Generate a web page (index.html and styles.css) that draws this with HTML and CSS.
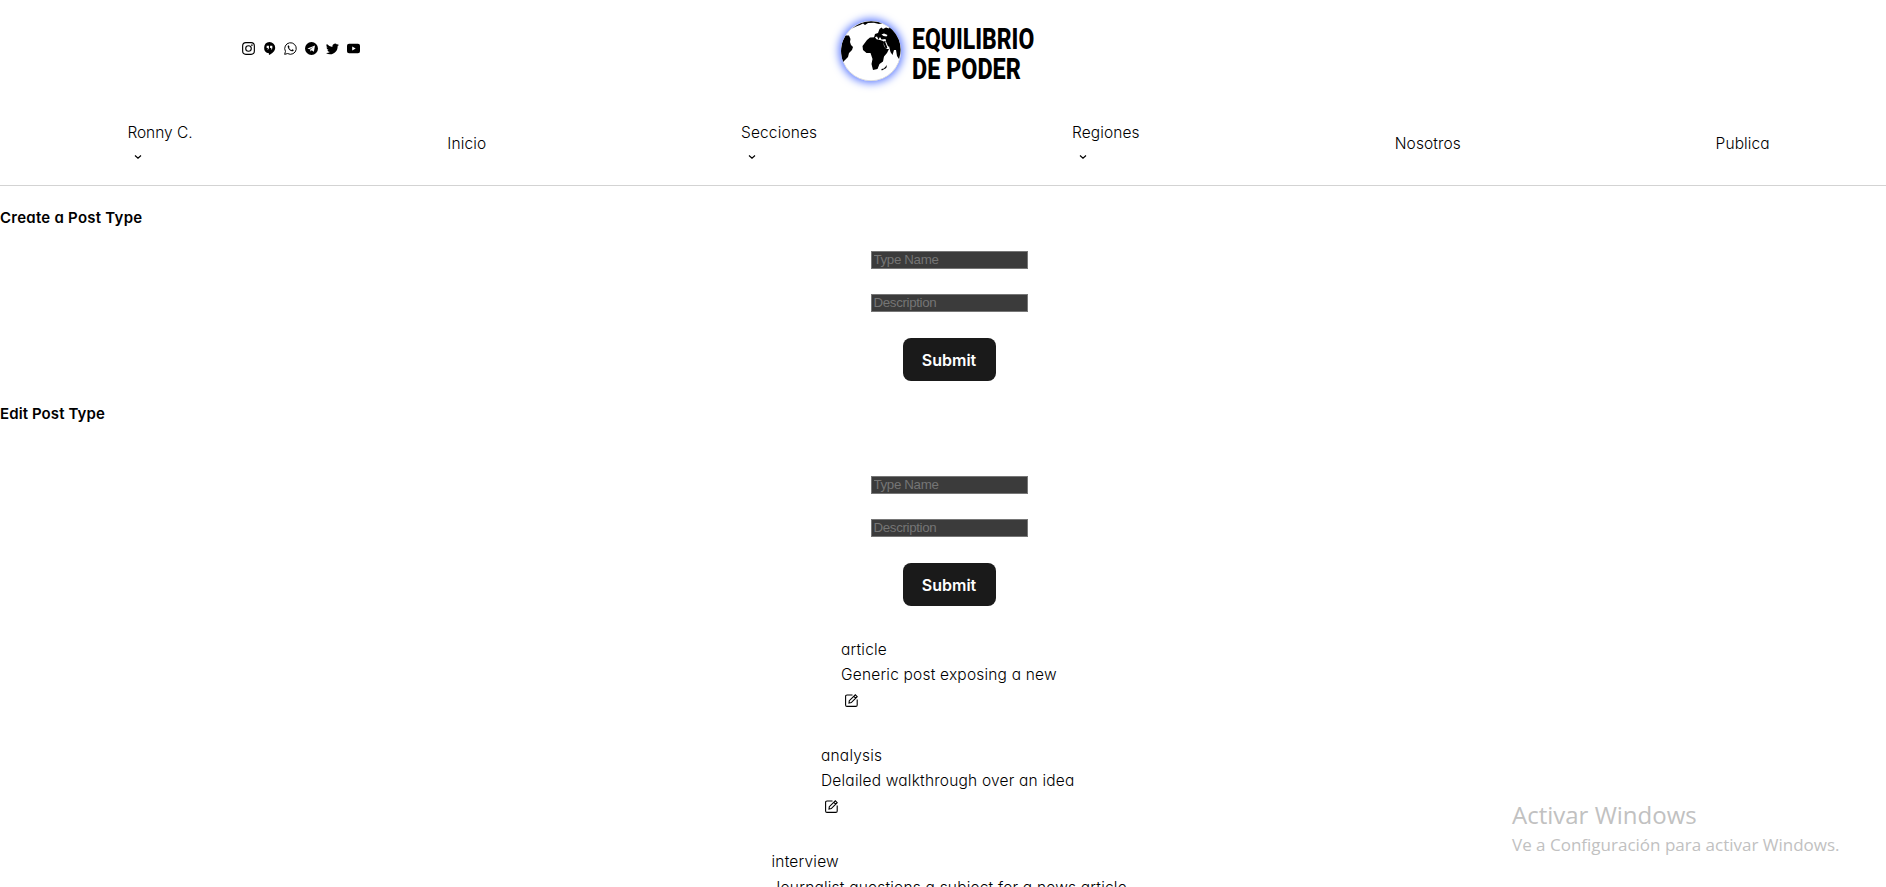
FILE: index.html
```
<!DOCTYPE html>
<html lang="es">
<head>
<meta charset="utf-8">
<title>Equilibrio de Poder</title>
<link rel="stylesheet" href="styles.css">
</head>
<body>
<header class="header">
  <div class="brand-row">
    <div class="social">
      <svg viewBox="0 0 16 16"><rect x=".8" y=".8" width="14.400" height="14.400" rx="4" fill="none" stroke="#000" stroke-width="1.400"/><circle cx="8" cy="8" r="3.400" fill="none" stroke="#000" stroke-width="1.400"/><circle cx="12.200" cy="3.900" r="1"/></svg>
      <svg viewBox="0 0 16 16"><path fill-rule="evenodd" d="M8 0a7 7 0 0 0-.7 13.900V16c4-1.700 7.700-5 7.700-9A7 7 0 0 0 8 0zM7.300 7.200c0 1.500-.8 2.200-1.700 2.400V8.200c.5-.1.700-.4.700-.8H4.500V4.600h2.800zm4.200 0c0 1.500-.8 2.200-1.700 2.400V8.200c.5-.1.700-.4.700-.8H8.700V4.600h2.800z"/></svg>
      <svg viewBox="0 0 16 16"><path d="M.8 15.200l1-3.700A7.100 7.100 0 1 1 4.500 14.200z" fill="none" stroke="#000" stroke-width="1.200"/><path d="M5.700 4.100c-.8.200-1.300 1.100-1.100 2 .6 2.600 2.600 4.600 5.100 5.300 1 .3 2.100-.2 2.300-1.500L10.100 9l-.9 1C7.900 9.500 6.800 8.500 6.200 7.100l.7-.9z"/></svg>
      <svg viewBox="0 0 16 16"><path fill-rule="evenodd" d="M8 0a8 8 0 1 0 0 16A8 8 0 0 0 8 0zM12.300 4.300l-1.400 7.800-2.700-1.800-1.500 1.500-.3-2.500 4.200-3.600-5.200 3.200-2.400-.9z"/></svg>
      <svg viewBox="0 0 16 16"><path d="M5 15c6 0 9.300-5 9.300-9.300v-.4A6.700 6.700 0 0 0 16 3.500a6.600 6.600 0 0 1-1.900.5 3.300 3.300 0 0 0 1.400-1.800 6.600 6.600 0 0 1-2 .8 3.300 3.300 0 0 0-5.600 3A9.300 9.300 0 0 1 1.100 2.600a3.300 3.300 0 0 0 1 4.400 3.300 3.300 0 0 1-1.500-.4 3.300 3.300 0 0 0 2.600 3.200 3.300 3.300 0 0 1-1.500.1 3.300 3.300 0 0 0 3.100 2.300A6.600 6.600 0 0 1 0 13.500 9.300 9.300 0 0 0 5 15"/></svg>
      <svg viewBox="0 0 16 16"><path fill-rule="evenodd" d="M2.500 2.200h11A2.500 2.500 0 0 1 16 4.700v6.600a2.500 2.500 0 0 1-2.500 2.500h-11A2.500 2.500 0 0 1 0 11.300V4.700a2.500 2.500 0 0 1 2.500-2.500zM6.400 5.400v5.200L10.700 8z"/></svg>
    </div>
    <div class="brand">
      <svg class="globe" viewBox="0 0 60 60"><circle cx="30" cy="30" r="29.800" fill="#fff" stroke="#aaa" stroke-width=".5"/>
        <path d="M4.500 14.500L8 14.500 9.500 18 9 21 10 24 12 26 11 29 8 32 7 36 4 39 2 41A30 30 0 0 1 4.500 14.500zM11 7.500Q19 .5 30 .2 37 .3 41 2.200L38 3 33 1.800 27 2 24 4 22 2.500 19 4 15 5.500zM26 19l3-2.500 5-.3 1.500 2L39 19l3 1 1 5 2 3 3 0-2 4-3 3.500-1 5-3.500 2.500-2 5-4.500 1-1.500-6 1-5-2-6-4 0-3.500-3-.5-4zM34 13l3-1 1.500-4 2-1.500 1.500 1.500 3-1.500 3 1 1-2a30 30 0 0 1 9 32.500L56 35l-1-6-2 0-1.500 5-2-3-1.500-6-3 3-1.500-3-1.500-4.500 3-.5-.5-2-4 .5-1.500-2.500-1.500 2.500-1.500-3-3 1zM46 44l-.7 3-4.500 2.500-.5-1.500 2.500-.5z"/>
        <path d="M40.500 13.500l2.500-1 3.500 1.500-1 1.500-3-.6zM44 20.500l1 0 2.500 6-1 .5z" fill="#fff"/></svg>
      <div class="name"><span class="line1">EQUILIBRIO</span><span class="line2">DE PODER</span></div>
    </div>
  </div>
  <nav class="nav">
    <div class="item w65 drop"><span>Ronny C.</span><svg class="chev" viewBox="0 0 8 6"><path d="M1 1.500l3 2.600 3-2.600"/></svg></div>
    <div class="item w39"><span>Inicio</span></div>
    <div class="item w76 drop"><span>Secciones</span><svg class="chev" viewBox="0 0 8 6"><path d="M1 1.500l3 2.600 3-2.600"/></svg></div>
    <div class="item w68 drop"><span>Regiones</span><svg class="chev" viewBox="0 0 8 6"><path d="M1 1.500l3 2.600 3-2.600"/></svg></div>
    <div class="item w66"><span>Nosotros</span></div>
    <div class="item w55"><span>Publica</span></div>
  </nav>
</header>
<main>
  <h2 class="title">Create a Post Type</h2>
  <form class="form create">
    <input type="text" placeholder="Type Name">
    <input type="text" placeholder="Description">
    <button type="button" class="submit">Submit</button>
  </form>
  <h2 class="title second">Edit Post Type</h2>
  <form class="form edit">
    <input type="text" placeholder="Type Name">
    <input type="text" placeholder="Description">
    <button type="button" class="submit">Submit</button>
  </form>
  <section class="types">
    <article class="type w217"><span>article</span><span>Generic post exposing a new</span><svg class="pen" viewBox="0 0 13 13"><path d="M7.500 1H2Q.6 1 .6 2.300V11Q.6 12.400 2 12.400h8.800q1.400 0 1.400-1.400V5.500M4 9l.3-2.300L10.300.8l1.900 1.900-5.900 5.900zM8.800 2.300l1.900 1.900"/></svg></article>
    <article class="type w257"><span>analysis</span><span>Delailed walkthrough over an idea</span><svg class="pen" viewBox="0 0 13 13"><path d="M7.500 1H2Q.6 1 .6 2.300V11Q.6 12.400 2 12.400h8.800q1.400 0 1.400-1.400V5.500M4 9l.3-2.300L10.300.8l1.900 1.900-5.900 5.900zM8.800 2.300l1.900 1.900"/></svg></article>
    <article class="type w356"><span>interview</span><span>Journalist questions a subject for a news article</span></article>
  </section>
</main>
<aside class="watermark"><span class="wm1">Activar Windows</span><span class="wm2">Ve a Configuración para activar Windows.</span></aside>
</body>
</html>
```
FILE: styles.css
```
* { box-sizing: border-box; }
body {
  margin: 0;
  height: 887px;
  overflow: hidden;
  background: #fff;
  color: #000;
  font: 300 15.5px/25.6px Inter, sans-serif;
  font-feature-settings: "cv11";
  letter-spacing: .2px;
}
.header { height: 186px; border-bottom: 1px solid #d3d3d3; }
.brand-row { height: 100px; display: flex; padding: 20px 0 0 242px; }
.social { display: flex; gap: 8px; padding-top: 21.5px; width: 599px; }
.social svg { width: 13px; height: 13px; }
.brand { display: flex; }
.globe { width: 60px; height: 60px; border-radius: 50%; box-shadow: 0 0 9px 2px #5a78ff; margin-top: 1px; }
.name { display: flex; flex-direction: column; align-items: flex-start; margin-left: 11px; padding-top: 4px; font: 800 30px/30px Roboto, sans-serif; letter-spacing: 0; white-space: nowrap; }
.name span { transform-origin: left; }
.line1 { transform: scaleX(.765); }
.line2 { transform: scaleX(.78); }
.nav { width: 1898px; height: 86px; padding-top: 2px; display: flex; justify-content: space-around; align-items: center; }
.item { display: flex; flex-direction: column; white-space: nowrap; letter-spacing: .12px; }
.drop { padding-top: 2px; }
.w65 { width: 65px; } .w39 { width: 39px; } .w76 { width: 76px; } .w68 { width: 68px; } .w66 { width: 66px; } .w55 { width: 55px; }
.w65 { letter-spacing: -.05px; }
.chev { width: 8px; height: 6px; margin: 9px 0 10px 7px; fill: none; stroke: #000; stroke-width: 1.2; }
.title { margin: 0; padding-top: 19px; height: 65px; font-size: 15px; font-weight: 600; line-height: 25.6px; letter-spacing: .25px; }
.second { padding-top: 20px; letter-spacing: .1px; }
.form { display: flex; flex-direction: column; align-items: center; gap: 25px; padding-left: 12px; }
.form input { width: 157px; height: 18px; padding: 0 2px 2px; border: 1px solid #767676; background: #3b3b3b; font: 13.333px "Liberation Sans", Arial, sans-serif; letter-spacing: -.35px; }
.form input::placeholder { color: #757575; opacity: 1; }
.submit { width: 93px; height: 43px; margin-top: 1px; border: 0; border-radius: 8px; background: #1a1a1a; color: #fff; font: 600 16px Inter, sans-serif; }
.edit { padding-top: 30px; }
.types { display: flex; flex-direction: column; align-items: center; gap: 29.6px; padding: 30.5px 0 0 12px; }
.type { display: flex; flex-direction: column; height: 76.8px; white-space: nowrap; }
.w217 { width: 216px; } .w257 { width: 256px; } .w356 { width: 355px; }
.pen { width: 13px; height: 13px; margin: 6px 0 0 4px; fill: none; stroke: #000; stroke-width: 1.1; }
.watermark { position: absolute; left: 1512px; top: 799px; display: flex; flex-direction: column; color: #c1c1c1; font-family: "Open Sans", sans-serif; font-weight: 400; letter-spacing: 0; white-space: nowrap; }
.wm1 { font-size: 24px; line-height: 32px; }
.wm2 { font-size: 17px; line-height: 26px; padding-top: 1px; }
```
